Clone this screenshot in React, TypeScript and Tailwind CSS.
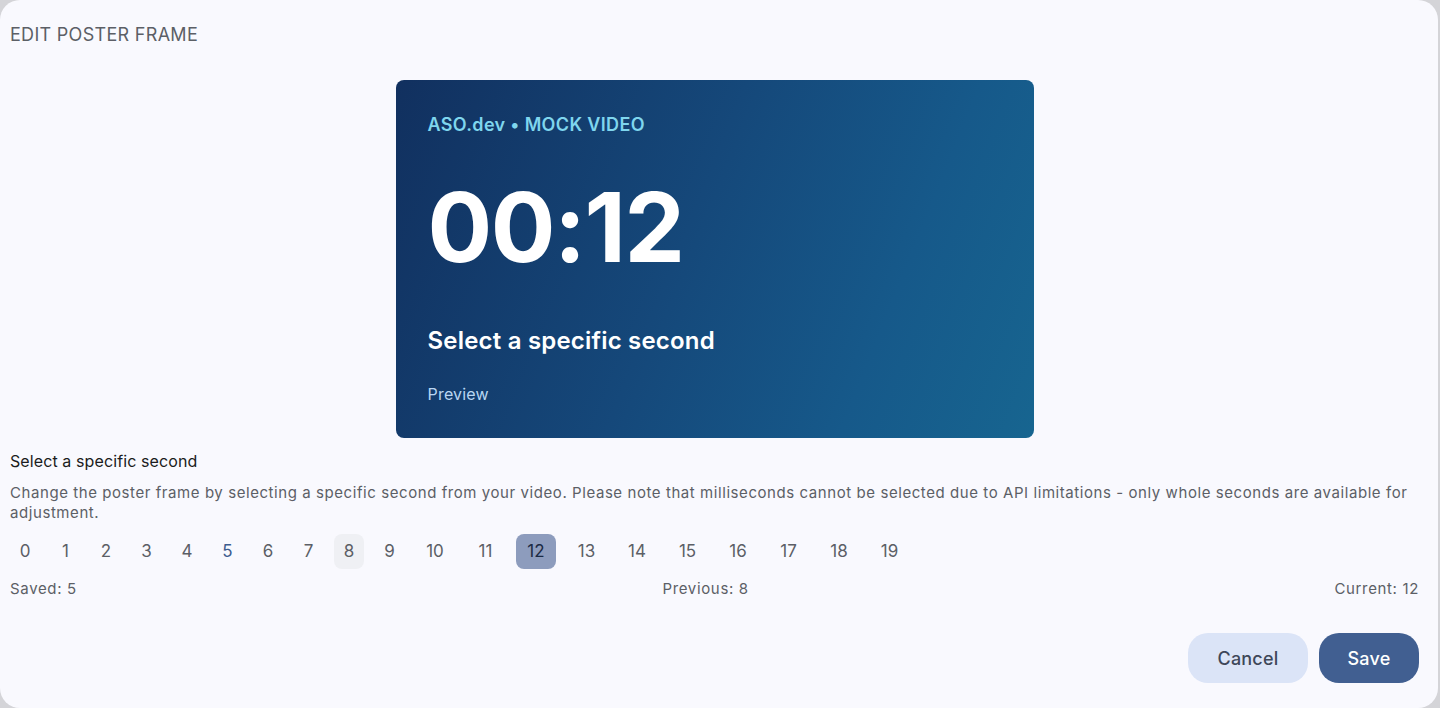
import React from "react";

const font = { fontFamily: "Inter, 'Noto Sans', sans-serif" };

export default function App() {
  const seconds = Array.from({ length: 20 }, (_, i) => i);
  return (
    <div className="w-[1440px] h-[708px] bg-[#d4d4d8] overflow-hidden" style={font}>
      <div className="w-[1438px] h-[708px] bg-[#f9f9fe] rounded-[20px] flex flex-col pl-[10px] pr-[19px]">
        <div className="h-[68px] flex items-center text-[18px] text-[#5c5f66] tracking-[0.3px] pt-[1px]">
          EDIT POSTER FRAME
        </div>
        <div className="flex justify-center mt-[12px]">
          <div className="w-[638px] h-[358px] rounded-[8px] bg-[linear-gradient(112deg,#11305f_0%,#15487a_45%,#16598a_75%,#176590_100%)] pl-[32px] pt-[33px] flex flex-col">
            <div className="text-[18px] font-semibold text-[#7fd6ee] leading-[24px] tracking-[0.35px]">
              ASO.dev • MOCK VIDEO
            </div>
            <div className="text-[96px] font-bold text-white leading-[96px] mt-[42px] tracking-[-1.5px]">
              00:12
            </div>
            <div className="text-[24px] font-semibold text-white leading-[30px] mt-[51px] tracking-[0.2px]">
              Select a specific second
            </div>
            <div className="text-[16px] text-[#b9d6f2] leading-[22px] mt-[27px] tracking-[0.2px]">Preview</div>
          </div>
        </div>
        <div className="text-[16px] text-[#1b1c20] leading-[22px] mt-[12px] tracking-[0.1px]">
          Select a specific second
        </div>
        <div className="text-[15px] text-[#5c5f66] leading-[20px] mt-[11px] tracking-[0.57px]">
          Change the poster frame by selecting a specific second from your video. Please note that milliseconds cannot be selected due to API limitations - only whole seconds are available for adjustment.
        </div>
        <div className="flex gap-[10.5px] mt-[11px]">
          {seconds.map((n) => (
            <div
              key={n}
              className={
                "h-[35px] flex items-center justify-center rounded-[8px] text-[17px] " +
                (n < 10 ? "w-[30px] " : "w-[40px] ") +
                (n === 12
                  ? "bg-[#8d9cbd] text-[#1b2a44]"
                  : n === 8
                  ? "bg-[#eff0f4] text-[#5c5f66]"
                  : n === 5
                  ? "text-[#3d5d8f]"
                  : "text-[#5c5f66]")
              }
            >
              {n}
            </div>
          ))}
        </div>
        <div className="flex justify-between text-[15px] text-[#5c5f66] leading-[20px] mt-[10px] tracking-[0.65px]">
          <span>Saved: 5</span>
          <span>Previous: 8</span>
          <span>Current: 12</span>
        </div>
        <div className="flex justify-end gap-[11px] mt-[34px]">
          <button className="w-[120px] h-[50px] rounded-[20px] bg-[#dbe4f7] text-[#3e4759] text-[18px] font-medium tracking-[0.2px]">
            Cancel
          </button>
          <button className="w-[100px] h-[50px] rounded-[20px] bg-[#415f91] text-white text-[18px] font-medium tracking-[0.2px]">
            Save
          </button>
        </div>
      </div>
    </div>
  );
}
